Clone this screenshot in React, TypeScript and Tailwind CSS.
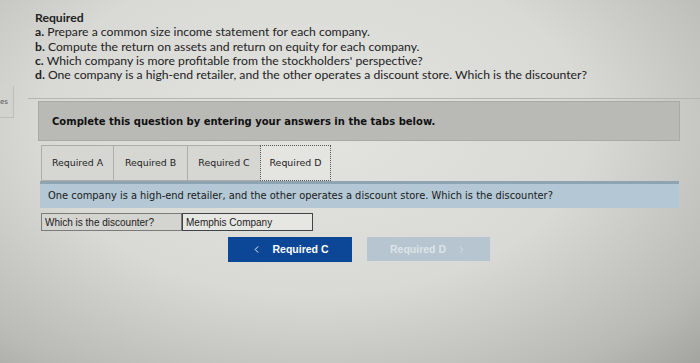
import { ChevronLeft, ChevronRight } from "lucide-react"

const tabs = ["Required A", "Required B", "Required C", "Required D"]

const items = [
  ["a.", "Prepare a common size income statement for each company."],
  ["b.", "Compute the return on assets and return on equity for each company."],
  ["c.", "Which company is more profitable from the stockholders' perspective?"],
  ["d.", "One company is a high-end retailer, and the other operates a discount store. Which is the discounter?"],
]

const tabWidths = ["w-[72px]", "w-[74px]", "w-[73px]", "w-[71px]"]

export default function App() {
  return (
    <div className="flex h-[363px] w-[700px] overflow-hidden bg-[radial-gradient(ellipse_at_45%_35%,#e3e3e0_0%,#d9d9d6_50%,#b9b9b6_85%,#a3a3a0_100%)] text-[#1b1b1b]">
      {/* left strip */}
      <div className="w-[16px] shrink-0 pt-[86px]">
        <div className="flex h-[32px] w-[14px] items-center border-r border-b border-[#bdbdba] bg-[#d2d2cf] pt-[2px] font-['DejaVu_Sans',sans-serif] text-[7px] text-[#555]">
          es
        </div>
      </div>

      <div className="flex-1">
        {/* Required header */}
        <div className="pl-[19px] pt-[11px] font-['Lato',sans-serif] text-[12.2px] leading-[14.3px] text-[#222]">
          <div className="font-bold">Required</div>
          {items.map(([k, t]) => (
            <div key={k}>
              <span className="font-bold">{k}</span> {t}
            </div>
          ))}
        </div>

        <div className="ml-[12px] mt-[16px] border-t border-[#b4b4b1] pt-[2px]">
          {/* gray instruction panel */}
          <div className="ml-[10px] flex h-[40px] w-[642px] items-center border border-[#a9aaa6] bg-[#b9bab6] pl-[13px] font-['DejaVu_Sans',sans-serif] text-[10px] font-bold text-[#111]">
            Complete this question by entering your answers in the tabs below.
          </div>

          {/* tabs */}
          <div className="ml-[13px] mt-[4px] flex h-[36px] items-stretch font-['DejaVu_Sans',sans-serif] text-[9.4px] text-[#222]">
            {tabs.map((t, i) =>
              i === 3 ? (
                <div
                  key={t}
                  className={`${tabWidths[i]} flex items-center justify-center border border-dotted border-[#555] bg-[#e4e4e1]`}
                >
                  {t}
                </div>
              ) : (
                <div
                  key={t}
                  className={`${tabWidths[i]} flex items-center justify-center border-y border-l border-[#acacaa] bg-[#d6d6d3]`}
                >
                  {t}
                </div>
              )
            )}
          </div>

          {/* blue band */}
          <div className="ml-[12px] flex h-[27px] w-[639px] items-center border-t-[3px] border-[#8ea4b2] bg-[#b3c8d4] pl-[8px] font-['DejaVu_Sans',sans-serif] text-[9.9px] text-[#1a1a1a]">
            One company is a high-end retailer, and the other operates a discount store. Which is the discounter?
          </div>

          {/* answer row */}
          <div className="ml-[13px] mt-[5px] flex h-[18px] font-['Liberation_Sans',Arial,sans-serif] text-[10px]">
            <div className="flex w-[141px] items-center border border-[#7b7b79] bg-[#d4d4d1] pl-[3px] text-[#222]">
              Which is the discounter?
            </div>
            <div className="flex w-[131px] items-center border border-[#3f4448] bg-[#e6e6e3] pl-[3px] text-[#222]">
              Memphis Company
            </div>
          </div>

          {/* nav buttons */}
          <div className="ml-[200px] mt-[6px] flex gap-[15px] font-['Liberation_Sans',Arial,sans-serif] text-[10.5px] font-bold">
            <div className="flex h-[25px] w-[124px] items-center justify-center gap-[10px] bg-[#0b4796] text-white">
              <ChevronLeft size={11} strokeWidth={2} />
              <span>Required C</span>
            </div>
            <div className="flex h-[24px] w-[123px] items-center justify-center gap-[10px] bg-[#b6c5cf] text-[#dde4e9]">
              <span>Required D</span>
              <ChevronRight size={11} strokeWidth={2} />
            </div>
          </div>
        </div>
      </div>
    </div>
  )
}
